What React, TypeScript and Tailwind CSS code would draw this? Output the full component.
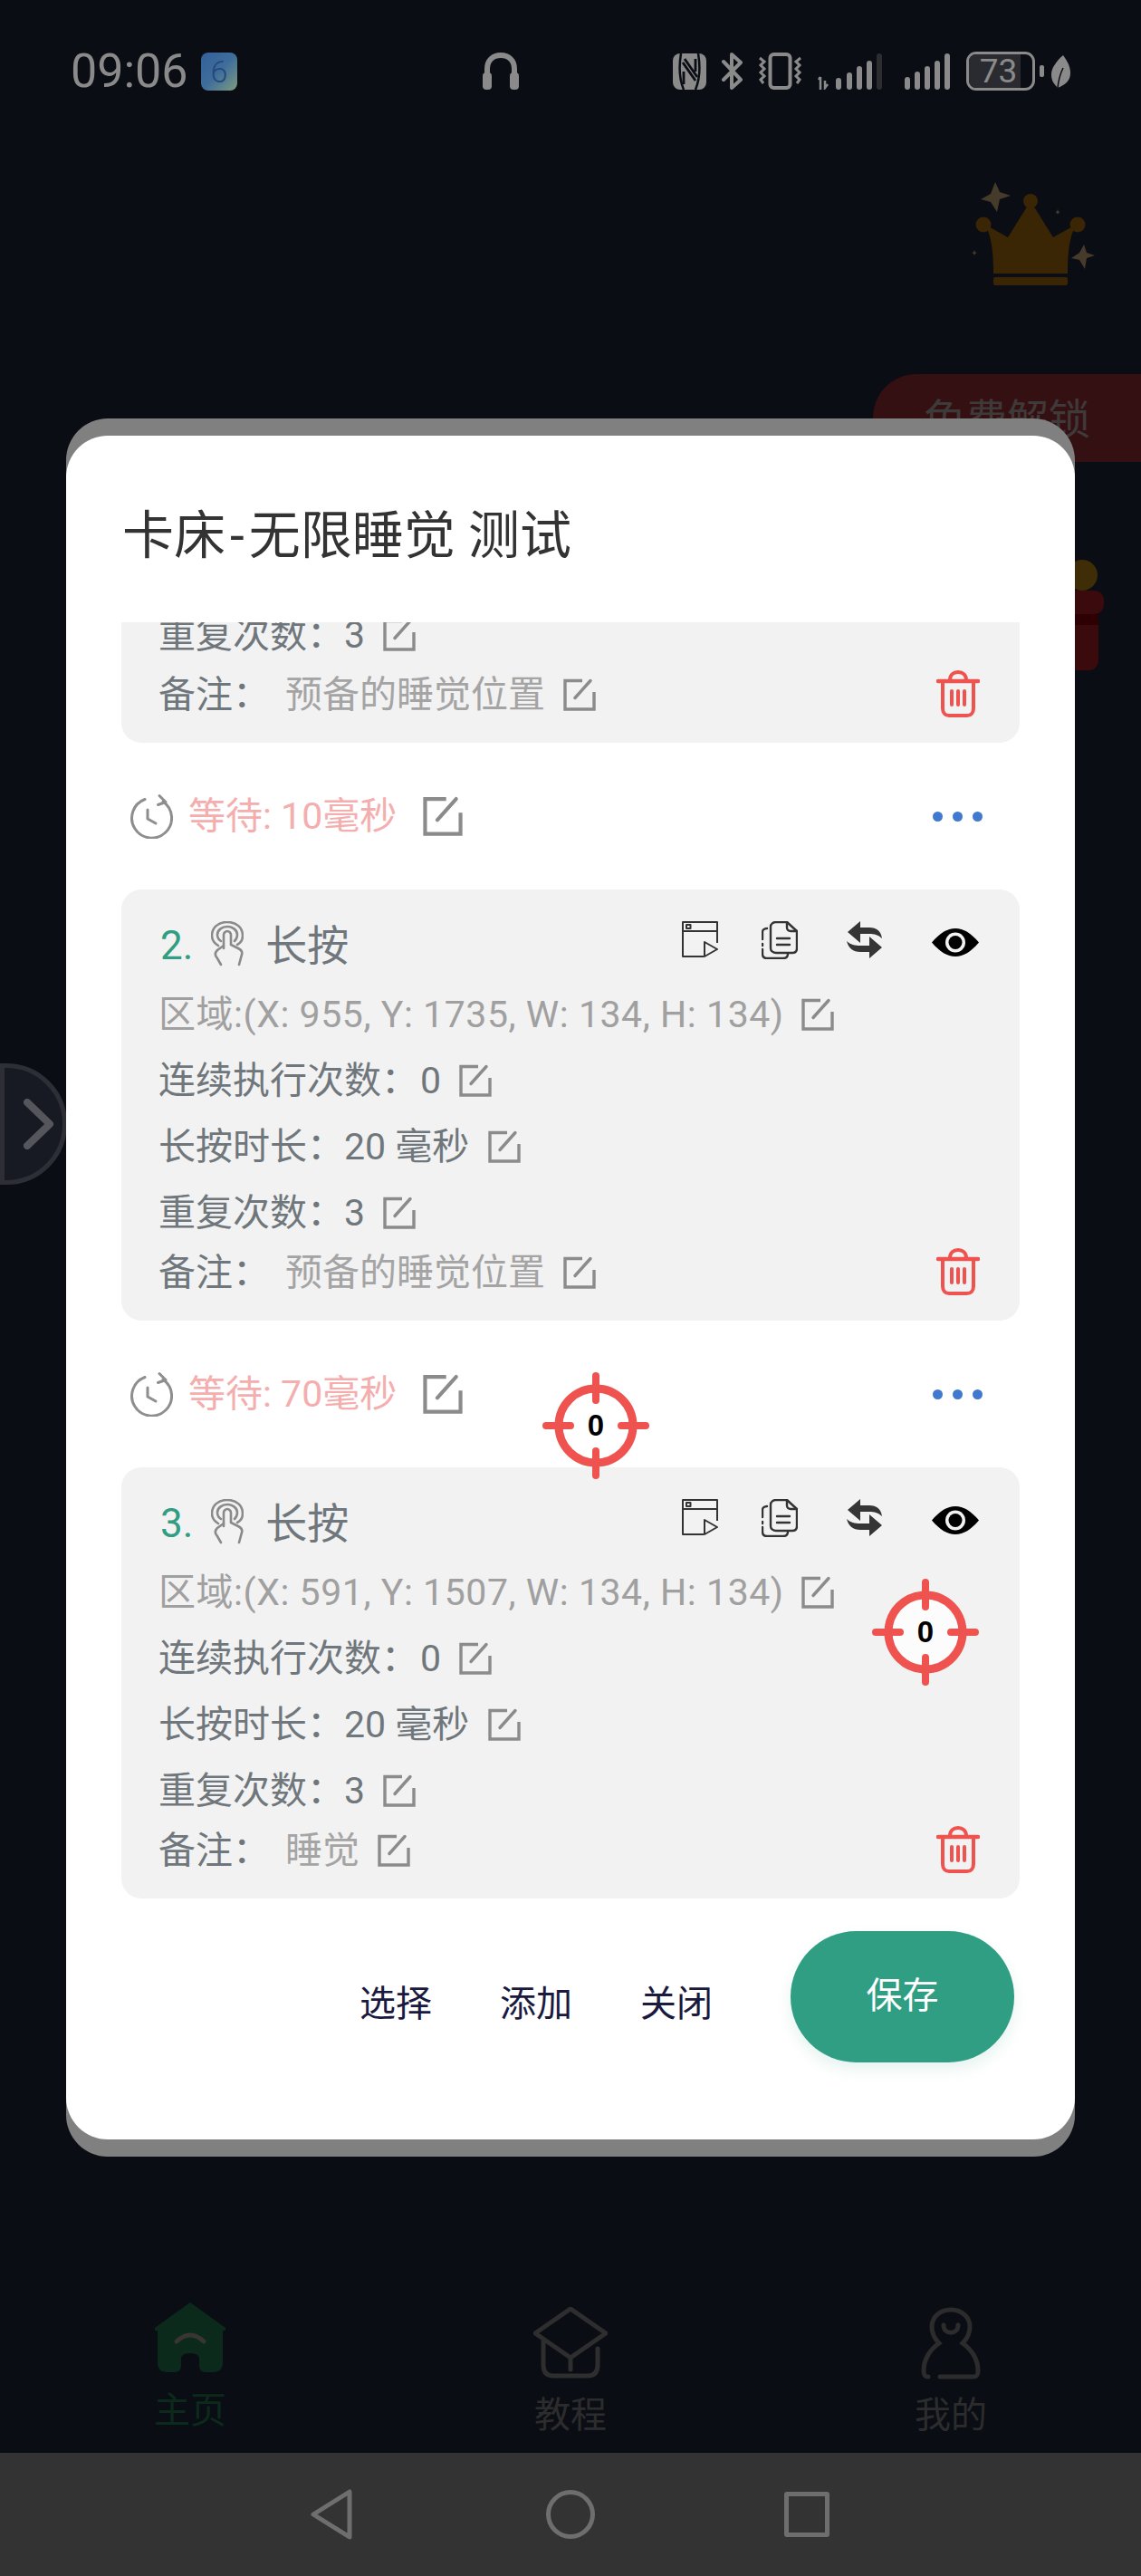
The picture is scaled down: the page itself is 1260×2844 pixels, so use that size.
import React from "react";

function Edit({ size = 36 }: { size?: number }) {
  return (
    <svg width={size} height={size} viewBox="0 0 36 36" fill="none" stroke="#8b8b8b" strokeWidth="3.4" className="shrink-0">
      <path d="M21 2.5H2V34H34V15" />
      <path d="M13 21.5L30 2.5" strokeLinecap="round" />
    </svg>
  );
}

function Clock() {
  return (
    <svg width="48" height="50" viewBox="0 0 48 50" fill="none" stroke="#8e8e8e" strokeWidth="3" className="shrink-0">
      <path d="M37 9A22 22 0 1 1 17 6.5" strokeLinecap="round" />
      <path d="M33 2.5L40 9.5L31.5 12.5" strokeLinecap="round" strokeLinejoin="round" />
      <path d="M20 18V28L29 33" strokeLinecap="round" strokeLinejoin="round" />
    </svg>
  );
}

function Touch() {
  return (
    <svg width="36" height="50" viewBox="0 0 36 50" fill="none" stroke="#8a8a8a" strokeWidth="2.6" strokeLinecap="round" className="shrink-0">
      <path d="M8 27C3 24 1 20 1 16C1 7 8 1 18 1C28 1 35 7 35 16C35 20 33 24 29 26" />
      <path d="M11 22C8 20 7 18 7 15C7 10 12 6 18 6C24 6 29 10 29 15C29 18 28 20 26 22" />
      <path d="M14 30V15C14 13 16 11 18 11C20 11 22 13 22 15V26L30 30C34 32 35 34 34 37L31 48" />
      <path d="M14 27L7 32C4 35 4 38 7 41L11 48" />
    </svg>
  );
}

function PlayWindow() {
  return (
    <svg width="40" height="40" viewBox="0 0 40 40" fill="none" stroke="#333" strokeWidth="2" strokeLinejoin="round" className="shrink-0">
      <path d="M24 39H1V1H39V24" />
      <path d="M1 11H39" />
      <rect x="5" y="4" width="4.5" height="4" />
      <path d="M25 23L39 31L25 39Z" />
    </svg>
  );
}

function CopyDoc() {
  return (
    <svg width="40" height="42" viewBox="0 0 40 42" fill="none" stroke="#333" strokeWidth="2.4" strokeLinecap="round" strokeLinejoin="round" className="shrink-0">
      <path d="M16 1H28L39 11V30C39 33 37 35 34 35H16C13 35 10 33 10 30V6C10 3 13 1 16 1Z" />
      <path d="M28 1V7C28 10 30 11 32 11H39" />
      <path d="M17 19H31M17 26H31" />
      <path d="M6 8C3 8 1 10 1 12V20M1 25V27M1 31V36C1 39 3 41 6 41H24C27 41 29 39 29 36" />
    </svg>
  );
}

function Swap() {
  return (
    <svg width="40" height="41" viewBox="0 0 40 41" fill="#353535" className="shrink-0">
      <path d="M1 12L15 0V7H25C33 7 38 11 39 19C35 15 30 14 25 14H15V24Z" />
      <path d="M39 29L25 41V34H15C7 34 2 30 0 22C4 26 9 27 15 27H25V17Z" />
    </svg>
  );
}

function Eye() {
  return (
    <svg width="52" height="31" viewBox="0 0 52 31" className="mt-[8px] shrink-0">
      <path d="M0 15.5C9 5 17 0 26 0C35 0 43 5 52 15.5C43 26 35 31 26 31C17 31 9 26 0 15.5Z" fill="#000" />
      <circle cx="26" cy="15.5" r="11" fill="#f2f2f2" />
      <circle cx="26" cy="15.5" r="7.5" fill="#000" />
    </svg>
  );
}

function Trash() {
  return (
    <svg width="48" height="52" viewBox="0 0 48 52" fill="none" stroke="#ee5350" strokeWidth="4" strokeLinecap="round" className="shrink-0">
      <path d="M2 12H46" strokeWidth="4.6" />
      <path d="M15 11C15 5 19 2 24 2C29 2 33 5 33 11" />
      <path d="M7 13V42C7 47 10 50 14 50H34C38 50 41 47 41 42V13" />
      <path d="M17 23V38M24 23V38M31 23V38" />
    </svg>
  );
}

function Crosshair({ className }: { className: string }) {
  return (
    <div className={className}>
      <svg width="118" height="118" viewBox="0 0 118 118" fill="none" stroke="#ef5350" strokeLinecap="round">
        <circle cx="59" cy="59" r="41" fill="#ffffff" fillOpacity="0.75" strokeWidth="9" />
        <path d="M59 4V31M59 87V114M4 59H31M87 59H114" strokeWidth="8" />
      </svg>
      <div className="absolute inset-0 flex items-center justify-center font-['Liberation_Sans',sans-serif] text-[33px] font-bold text-black">0</div>
    </div>
  );
}

function Dots() {
  return (
    <div className="ml-auto mr-[41px] flex gap-[11px]">
      <div className="h-[11px] w-[11px] rounded-full bg-[#4179ce]" />
      <div className="h-[11px] w-[11px] rounded-full bg-[#4179ce]" />
      <div className="h-[11px] w-[11px] rounded-full bg-[#4179ce]" />
    </div>
  );
}

function WaitRow({ ms }: { ms: number }) {
  return (
    <div className="flex h-[162px] items-center pl-[9px]">
      <Clock />
      <span className="ml-[17px] pt-[2px] text-[41px] text-[#f4aeae]">等待: {ms}毫秒</span>
      <span className="ml-[29px]"><Edit size={44} /></span>
      <Dots />
    </div>
  );
}

function Card({ n, area, note }: { n: number; area: string; note: string }) {
  return (
    <div className="relative flex h-[476px] flex-col rounded-[22px] bg-[#f2f2f2] pl-[41px] pr-[44px] pt-[37px] text-[41px] leading-[50px] text-[#6f777c]">
      <div className="flex h-[50px] items-start">
        <span className="ml-[2px] text-[44px] leading-[50px] text-[#2f9e82]">{n}.</span>
        <span className="ml-[20px] mt-[-2px]"><Touch /></span>
        <span className="ml-[24px] text-[46px] leading-[50px]">长按</span>
        <div className="ml-auto mr-[1px] mt-[-2px] flex items-start">
          <PlayWindow />
          <span className="ml-[48px]"><CopyDoc /></span>
          <span className="ml-[54px]"><Swap /></span>
          <span className="ml-[54px]"><Eye /></span>
        </div>
      </div>
      <div className="mt-[26px] flex h-[50px] items-center text-[#a0a0a0]">
        <span className="tracking-[0.55px]">{area}</span>
        <span className="ml-[19px]"><Edit /></span>
      </div>
      <div className="mt-[23px] flex h-[50px] items-center">
        <span>连续执行次数：</span>
        <span className="ml-[2px]">0</span>
        <span className="ml-[20px]"><Edit /></span>
      </div>
      <div className="mt-[23px] flex h-[50px] items-center">
        <span>长按时长：</span>
        <span>20 毫秒</span>
        <span className="ml-[21px]"><Edit /></span>
      </div>
      <div className="mt-[23px] flex h-[50px] items-center">
        <span>重复次数：</span>
        <span>3</span>
        <span className="ml-[20px]"><Edit /></span>
      </div>
      <div className="mt-[16px] flex h-[50px] items-center">
        <span>备注：</span>
        <span className="ml-[17px] text-[#a4a4a4]">{note}</span>
        <span className="ml-[20px]"><Edit /></span>
        <span className="mb-[2px] ml-auto"><Trash /></span>
      </div>
    </div>
  );
}

function StatusIcons() {
  const g = "#8a8a8a";
  return (
    <div className="ml-auto mr-[78px] flex items-center">
      <svg width="37" height="40" viewBox="0 0 37 40">
        <rect x="0" y="0" width="37" height="40" rx="8" fill={g} />
        <path d="M9 0C7 12 7 28 12 40M28 0C30 12 30 28 25 40" stroke="#0a0d14" strokeWidth="2.5" fill="none" />
        <path d="M11 10L25 30M13 6L27 26M25 6V20M12 20V34" stroke="#0a0d14" strokeWidth="2.8" fill="none" />
      </svg>
      <svg width="25" height="41" viewBox="0 0 25 41" fill="none" stroke={g} strokeWidth="4" className="ml-[16px]" strokeLinejoin="round" strokeLinecap="round">
        <path d="M3 10L22 30L12 39V2L22 11L3 30" />
      </svg>
      <svg width="49" height="41" viewBox="0 0 49 41" fill="none" stroke={g} strokeWidth="3" className="ml-[16px]">
        <rect x="13.5" y="2" width="22" height="37" rx="4" strokeWidth="4" />
        <path d="M2 6L7 10L3 14L7 18L3 22L7 26L3 30L6 34M47 6L42 10L46 14L42 18L46 22L42 26L46 30L43 34" />
      </svg>
      <svg width="73" height="40" viewBox="0 0 73 40" className="ml-[16px]" fill={g}>
        <path d="M4 26V40M2 29L4 26M9 30V38L12 34" stroke={g} strokeWidth="2.5" fill="none" />
        <rect x="21" y="27" width="6" height="13" rx="3" />
        <rect x="33" y="21" width="6" height="19" rx="3" />
        <rect x="44" y="14" width="6" height="26" rx="3" />
        <rect x="55" y="8" width="6" height="32" rx="3" />
        <rect x="66" y="0" width="6" height="40" rx="3" fill="#2c2d31" />
      </svg>
      <svg width="51" height="40" viewBox="0 0 51 40" className="ml-[24px]" fill={g}>
        <rect x="0" y="26" width="6" height="14" rx="3" />
        <rect x="11" y="20" width="6" height="20" rx="3" />
        <rect x="22" y="14" width="6" height="26" rx="3" />
        <rect x="33" y="8" width="6" height="32" rx="3" />
        <rect x="44" y="0" width="6" height="40" rx="3" />
      </svg>
      <div className="relative ml-[17px] flex h-[43px] w-[76px] items-center justify-center overflow-hidden rounded-[11px] border-[3px] border-[#8a8a8a]">
        <div className="absolute inset-y-0 left-0 w-[57px] bg-[#2a2b30]" />
        <span className="relative mr-[5px] font-[Roboto,sans-serif] text-[37px] leading-none text-[#8a8a8a]">73</span>
      </div>
      <div className="ml-[5px] h-[13px] w-[5px] rounded-[2px] bg-[#8a8a8a]" />
      <svg width="21" height="36" viewBox="0 0 21 36" className="ml-[8px]" fill={g}>
        <path d="M13 0C19 8 21 14 21 20C21 28 15 33 7 36C1 30 0 26 0 21C0 14 6 6 13 0Z" />
        <path d="M7 36C8 26 10 20 13 14" stroke="#0a0d14" strokeWidth="1.5" fill="none" />
      </svg>
    </div>
  );
}

export default function App() {
  return (
    <div className="relative flex h-[2844px] w-[1260px] flex-col overflow-hidden bg-[#0a0d14] font-[Roboto,'Noto_Sans_CJK_SC',sans-serif]">
      {/* status bar */}
      <div className="flex h-[157px] shrink-0 items-center pl-[78px]">
        <span className="w-[134px] text-[52px] leading-none text-[#8a8a8a]">09:06</span>
        <div className="ml-[10px] flex h-[42px] w-[40px] items-center justify-center rounded-[8px] bg-gradient-to-br from-[#34609a] via-[#3f6d9a] to-[#7f9a7c] text-[34px] font-light leading-none text-[#25477f]">6</div>
        <svg width="40" height="41" viewBox="0 0 40 41" fill="none" className="ml-[271px]">
          <path d="M5 24V18C5 9 11 3 20 3C29 3 35 9 35 18V24" stroke="#8a8a8a" strokeWidth="6" />
          <rect x="0" y="22" width="10" height="19" rx="4" fill="#8a8a8a" />
          <rect x="30" y="22" width="10" height="19" rx="4" fill="#8a8a8a" />
        </svg>
        <StatusIcons />
      </div>

      {/* dimmed page behind the dialog */}
      <div className="flex flex-1 flex-col items-end">
        <svg width="150" height="130" viewBox="0 0 150 130" className="mr-[40px] mt-[33px]">
          <path d="M29 11L34 22L46 26L34 30L31 44L24 33L13 30L24 24Z" fill="#463a2a" />
          <path d="M127 80L130 89L139 92L130 95L128 107L122 97L113 95L122 89Z" fill="#463a2a" />
          <path d="M98 41L99 43.5L101 44L99 45L98 47L97 45L95 44L97 43.5Z" fill="#463a2a" />
          <path d="M6 86L7 88.5L9 89L7 90L6 92L5 90L3 89L5 88.5Z" fill="#463a2a" />
          <circle cx="68" cy="32" r="8" fill="#3a2504" />
          <circle cx="16" cy="58" r="8.5" fill="#3a2504" />
          <circle cx="120" cy="58" r="8.5" fill="#3a2504" />
          <path d="M68 32L93 72L118 58C111 72 109 88 109 112H27C27 88 25 72 18 58L43 72Z" fill="#3a2504" />
          <rect x="27" y="116" width="82" height="9" rx="2" fill="#3a2504" />
        </svg>
        <div className="mt-[93px] flex h-[97px] w-[296px] items-start rounded-l-[48px] bg-[#351012] pl-[56px] pt-[22px] text-[46px] leading-[56px] text-[#3f3a3a]">免费解锁</div>
        <svg width="70" height="122" viewBox="0 0 70 122" className="mr-[41px] mt-[108px]">
          <circle cx="46" cy="17" r="17" fill="#3f2d08" />
          <rect x="0" y="34" width="70" height="26" rx="10" fill="#3a0a0d" />
          <rect x="0" y="60" width="64" height="12" fill="#2e0004" />
          <path d="M0 72H64V110C64 117 60 122 54 122H0Z" fill="#3a0a0d" />
        </svg>

        <div className="mt-auto grid h-[178px] w-full grid-cols-3">
          <div className="flex flex-col items-center pt-[12px] text-[#0c2a1c]">
            <svg width="78" height="78" viewBox="0 0 78 78" className="mb-[22px]">
              <path d="M39 0L78 28V31H75V66Q75 77 64 77H56Q49 77 49 70V62Q49 56 39 56Q29 56 29 62V70Q29 77 22 77H14Q3 77 3 66V31H0V28Z" fill="#0c2a1c" />
              <path d="M24 43Q39 29 54 43" stroke="#3a3535" strokeWidth="5" fill="none" strokeLinecap="round" />
            </svg>
            <span className="text-[40px] leading-[40px]">主页</span>
          </div>
          <div className="flex flex-col items-center pt-[17px] text-[#2c2c2c]">
            <svg width="82" height="79" viewBox="0 0 82 79" fill="none" stroke="#2e2e2e" strokeWidth="5" strokeLinecap="round" strokeLinejoin="round" className="mb-[21px]">
              <path d="M41 2L80 29L41 56L2 29Z" />
              <path d="M11 38V64Q11 76 22 76H60Q71 76 71 64V46" />
              <path d="M41 56V69" />
            </svg>
            <span className="text-[40px] leading-[40px]">教程</span>
          </div>
          <div className="flex flex-col items-center pt-[17px] text-[#2c2c2c]">
            <svg width="66" height="80" viewBox="0 0 66 80" fill="none" stroke="#2c2c2c" strokeWidth="5" strokeLinecap="round" className="mb-[20px]">
              <path d="M8 77C4 77 3 75 3 70C3 58 10 47 20 40C15 35 12 30 12 22C12 11 21 3 33 3C45 3 54 11 54 22C54 30 51 35 46 40C56 47 63 58 63 70C63 75 62 77 58 77H21" />
              <path d="M25 20C25 31 41 31 41 20" />
            </svg>
            <span className="text-[40px] leading-[40px]">我的</span>
          </div>
        </div>
      </div>

      {/* system navigation bar */}
      <div className="flex h-[136px] shrink-0 items-center bg-[#333333] pl-[343px]">
        <svg width="46" height="56" viewBox="0 0 46 56" fill="none" stroke="#6e6e6e" strokeWidth="5" strokeLinejoin="round">
          <path d="M43 3V53L3 28Z" />
        </svg>
        <div className="ml-[214px] h-[54px] w-[54px] rounded-full border-[5px] border-[#6e6e6e]" />
        <div className="ml-[209px] h-[50px] w-[50px] rounded-[3px] border-[5px] border-[#6e6e6e]" />
      </div>

      {/* side handle */}
      <div className="absolute left-0 top-[1174px] flex h-[134px] w-[74px] items-center rounded-r-[67px] border-[5px] border-[#2e2f36] bg-[#171923] pl-[21px]">
        <svg width="34" height="56" viewBox="0 0 34 56" fill="none" stroke="#55565b" strokeWidth="8" strokeLinecap="round" strokeLinejoin="round">
          <path d="M4 4L29 28L4 52" />
        </svg>
      </div>

      {/* dialog */}
      <div className="absolute left-[73px] top-[462px] h-[1919px] w-[1114px] rounded-[46px] bg-[#808080] py-[19px]">
        <div className="flex h-full flex-col rounded-[46px] bg-white">
          <div className="flex h-[206px] shrink-0 items-center whitespace-pre pl-[62px] pt-[14px] text-[57px] leading-none text-[#333333]">
            <span>卡床</span>
            <span className="px-[5px]">-</span>
            <span>无限睡觉 测试</span>
          </div>
          <div className="mx-[61px] h-[1409px] shrink-0 overflow-hidden">
            <div className="mt-[-343px]">
              <Card n={1} area="区域:(X: 955, Y: 1735, W: 134, H: 134)" note="预备的睡觉位置" />
              <WaitRow ms={10} />
              <Card n={2} area="区域:(X: 955, Y: 1735, W: 134, H: 134)" note="预备的睡觉位置" />
              <WaitRow ms={70} />
              <Card n={3} area="区域:(X: 591, Y: 1507, W: 134, H: 134)" note="睡觉" />
            </div>
          </div>
          <div className="flex items-start justify-end pr-[67px] pt-[36px]">
            <div className="mt-[56px] flex gap-[75px] text-[40px] leading-[50px] text-[#1a1a40]">
              <span>选择</span>
              <span>添加</span>
              <span>关闭</span>
            </div>
            <div className="ml-[86px] flex h-[145px] w-[247px] items-center justify-center rounded-full bg-[#2f9e82] pb-[2px] text-[40px] text-white shadow-[0_8px_16px_rgba(47,158,130,0.12)]">保存</div>
          </div>
        </div>
      </div>

      <Crosshair className="absolute left-[599px] top-[1515px] h-[118px] w-[118px]" />
      <Crosshair className="absolute left-[963px] top-[1743px] h-[118px] w-[118px]" />
    </div>
  );
}
